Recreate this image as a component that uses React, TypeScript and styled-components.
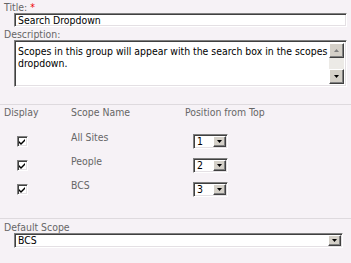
import styled, { createGlobalStyle } from 'styled-components'

const GlobalStyle = createGlobalStyle`
  html, body {
    margin: 0;
    padding: 0;
    background: #f6f2f6;
  }
  body {
    font-family: 'DejaVu Sans Condensed', 'DejaVu Sans', sans-serif;
    font-size: 10.4px;
  }
`

const SCOPES = [
  { name: 'All Sites', position: 1 },
  { name: 'People', position: 2 },
  { name: 'BCS', position: 3 },
]

function ArrowDown() {
  return (
    <svg width="5" height="3" viewBox="0 0 5 3">
      <path d="M0 0H5L2.5 3Z" fill="#000" />
    </svg>
  )
}

function ArrowUp() {
  return (
    <svg width="5" height="3" viewBox="0 0 5 3">
      <path d="M0 3H5L2.5 0Z" fill="#808080" />
    </svg>
  )
}

function Dropdown({ value, wide }: { value: string; wide?: boolean }) {
  return (
    <SelectBox $wide={wide}>
      <SelectValue>{value}</SelectValue>
      <SelectButton>
        <ArrowDown />
      </SelectButton>
    </SelectBox>
  )
}

export default function App() {
  return (
    <Page>
      <GlobalStyle />
      <Section $top={1}>
        <Label>
          Title: <Required>*</Required>
        </Label>
        <TextBox>Search Dropdown</TextBox>
        <Label>Description:</Label>
        <TextArea>
          <AreaText>Scopes in this group will appear with the search box in the scopes dropdown.</AreaText>
          <ScrollBar>
            <ScrollArrow>
              <ArrowUp />
            </ScrollArrow>
            <ScrollTrack />
            <ScrollArrow>
              <ArrowDown />
            </ScrollArrow>
          </ScrollBar>
        </TextArea>
      </Section>

      <Divider $gap={17} />

      <ScopeTable>
        <HeadCell>Display</HeadCell>
        <HeadCell>Scope Name</HeadCell>
        <HeadCell>Position from Top</HeadCell>
        {SCOPES.map((s) => (
          <Row key={s.name}>
            <CheckCell>
              <CheckBox>
                <svg width="7" height="7" viewBox="0 0 7 7">
                  <path d="M0 3L2 5L6 1V3L2 7L0 5Z" fill="#000" />
                </svg>
              </CheckBox>
            </CheckCell>
            <NameCell>{s.name}</NameCell>
            <PosCell>
              <Dropdown value={String(s.position)} />
            </PosCell>
          </Row>
        ))}
      </ScopeTable>

      <Divider $gap={15} />

      <Section $top={2}>
        <Label>Default Scope</Label>
        <Dropdown value="BCS" wide />
      </Section>
    </Page>
  )
}

const Page = styled.div`
  width: 351px;
  height: 263px;
  overflow: hidden;
`

const Section = styled.div<{ $top: number }>`
  display: flex;
  flex-direction: column;
  padding: ${({ $top }) => $top}px 4px 0 4px;
`

const Label = styled.div`
  color: #666;
  line-height: 13px;
  height: 12px;
`

const Required = styled.span`
  color: #e00;
`

const sunken = `
  background: #fff;
  border-style: solid;
  border-width: 1px;
  border-color: #808080 #fff #fff #808080;
  box-shadow: inset 1px 1px 0 #404040, inset -1px -1px 0 #e4e0e4;
`

const TextBox = styled.div`
  ${sunken}
  margin: 0 0 1px 10px;
  height: 14px;
  box-sizing: border-box;
  padding: 0 3px;
  line-height: 12px;
  color: #000;
`

const TextArea = styled.div`
  ${sunken}
  margin-left: 10px;
  height: 47px;
  box-sizing: border-box;
  display: flex;
  padding: 2px;
`

const AreaText = styled.div`
  flex: 1;
  color: #000;
  line-height: 12px;
  padding: 2px 1px;
`

const ScrollBar = styled.div`
  width: 15px;
  display: flex;
  flex-direction: column;
  background: #eceae6;
`

const ScrollArrow = styled.div`
  height: 15px;
  box-sizing: border-box;
  background: #d4d0c8;
  border-style: solid;
  border-width: 1px;
  border-color: #fff #404040 #404040 #fff;
  box-shadow: inset -1px -1px 0 #808080;
  display: flex;
  align-items: center;
  justify-content: center;
`

const ScrollTrack = styled.div`
  flex: 1;
`

const Divider = styled.div<{ $gap: number }>`
  height: 1px;
  background: #dedade;
  margin-top: ${({ $gap }) => $gap}px;
`

const ScopeTable = styled.div`
  display: grid;
  grid-template-columns: 67px 114px 1fr;
  padding: 1px 4px 0;
`

const HeadCell = styled.div`
  color: #666;
  line-height: 13px;
  height: 25px;
`

const Row = styled.div`
  display: contents;
`

const CheckCell = styled.div`
  height: 24px;
  padding: 5px 0 0 13px;
  box-sizing: border-box;
`

const CheckBox = styled.div`
  ${sunken}
  width: 11px;
  height: 11px;
  box-sizing: border-box;
  display: flex;
  align-items: center;
  justify-content: center;
`

const NameCell = styled.div`
  color: #666;
  line-height: 13px;
`

const PosCell = styled.div`
  padding: 3px 0 0 8px;
`

const SelectBox = styled.div<{ $wide?: boolean }>`
  ${sunken}
  width: ${({ $wide }) => ($wide ? '329px' : '35px')};
  margin-left: ${({ $wide }) => ($wide ? '10px' : '0')};
  height: 15px;
  box-sizing: border-box;
  display: flex;
  padding: 1px;
`

const SelectValue = styled.div`
  flex: 1;
  color: #000;
  line-height: 11px;
  padding-left: 2px;
`

const SelectButton = styled.div`
  width: 13px;
  box-sizing: border-box;
  background: #d4d0c8;
  border-style: solid;
  border-width: 1px;
  border-color: #fff #404040 #404040 #fff;
  box-shadow: inset -1px -1px 0 #808080;
  display: flex;
  align-items: center;
  justify-content: center;
`
